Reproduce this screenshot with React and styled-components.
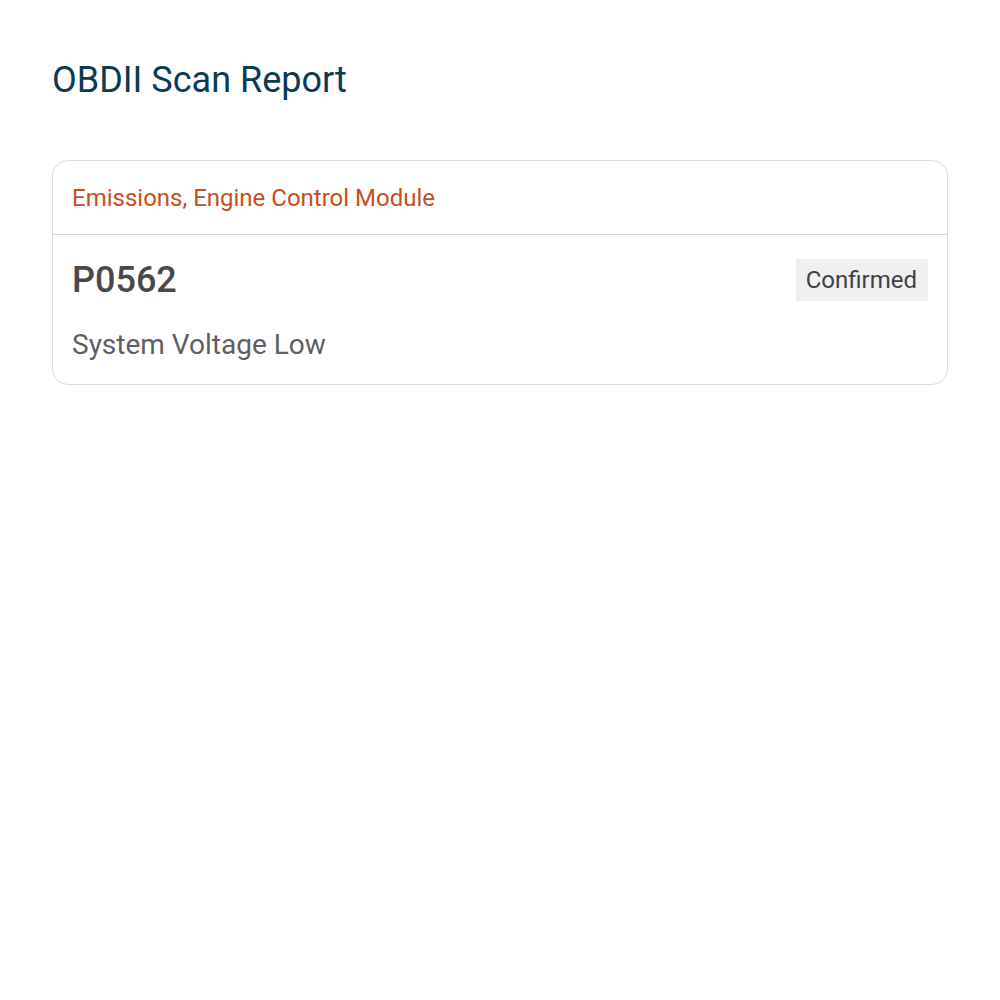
import React from "react";
import styled, { createGlobalStyle } from "styled-components";

const Global = createGlobalStyle`
  html, body { margin: 0; padding: 0; background: #ffffff; }
  body { font-family: Roboto, "Noto Sans", sans-serif; }
`;

const Page = styled.main`
  padding: 56px 52px;
  display: flex;
  flex-direction: column;
  gap: 56px;
`;

const Title = styled.h1`
  margin: 0;
  font-size: 36px;
  font-weight: 400;
  line-height: 48px;
  color: #0b3a52;
`;

const Card = styled.section`
  border: 1px solid #dcdcdc;
  border-radius: 16px;
  overflow: hidden;
`;

const CardHeader = styled.header`
  height: 73px;
  padding: 0 19px;
  display: flex;
  align-items: center;
  border-bottom: 1px solid #d6d6d6;
  font-size: 24px;
  color: #c4501b;
`;

const CodeRow = styled.div`
  padding: 24px 19px 22px 19px;
  display: flex;
  flex-direction: column;
  gap: 27px;
`;

const TopLine = styled.div`
  display: flex;
  align-items: center;
  justify-content: space-between;
`;

const Code = styled.span`
  font-size: 36px;
  font-weight: 500;
  color: #494949;
  line-height: 42px;
`;

const Badge = styled.span`
  background: #f0f0f3;
  color: #3f3f46;
  font-size: 24px;
  padding: 0 11px 0 10px;
  line-height: 42px;
`;

const Description = styled.p`
  margin: 0;
  font-size: 28px;
  color: #5f5f5f;
  line-height: 34px;
`;

export default function App() {
  return (
    <>
      <Global />
      <Page>
        <Title>OBDII Scan Report</Title>
        <Card>
          <CardHeader>Emissions, Engine Control Module</CardHeader>
          <CodeRow>
            <TopLine>
              <Code>P0562</Code>
              <Badge>Confirmed</Badge>
            </TopLine>
            <Description>System Voltage Low</Description>
          </CodeRow>
        </Card>
      </Page>
    </>
  );
}
